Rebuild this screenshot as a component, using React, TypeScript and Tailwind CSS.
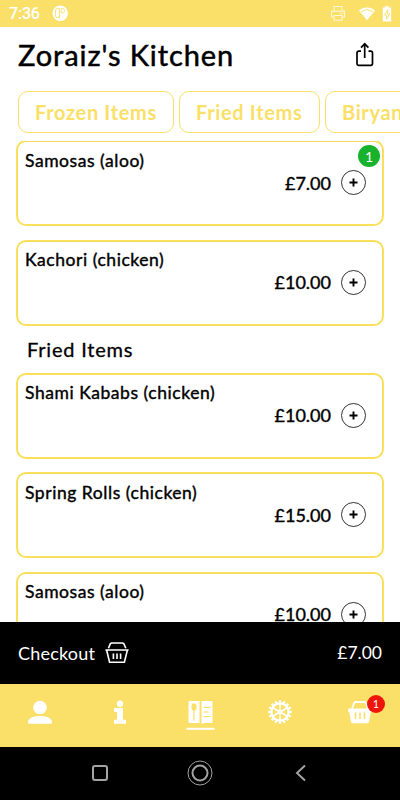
import type { ReactNode } from "react";

type Dish = { name: string; price: string; count?: number };

const frozen: Dish[] = [
  { name: "Samosas (aloo)", price: "£7.00", count: 1 },
  { name: "Kachori (chicken)", price: "£10.00" },
];

const fried: Dish[] = [
  { name: "Shami Kababs (chicken)", price: "£10.00" },
  { name: "Spring Rolls (chicken)", price: "£15.00" },
  { name: "Samosas (aloo)", price: "£10.00" },
];

function StatusBar() {
  return (
    <div className="flex h-[27px] shrink-0 items-center bg-[#fadf68] pr-[8px] pl-[9px] text-white">
      <span className="w-[42px] font-[Roboto] text-[16px] leading-[27px] font-medium tracking-[-0.2px]">7:36</span>
      <svg width="17" height="17" viewBox="0 0 17 17" className="ml-px">
        <circle cx="8.2" cy="8.2" r="7.8" fill="#fff" />
        <path d="M7.5 13V3.5M7.5 3.5H5.4A2 2 0 0 0 3.5 5.5v5.3a2 2 0 0 0 4 0M9.2 3.5h1.4a1.8 1.8 0 0 1 1.8 1.8v.9A1.8 1.8 0 0 1 10.6 8H9.2z" fill="none" stroke="#fadf68" strokeWidth=".9" />
      </svg>
      <div className="ml-auto flex items-center">
        <svg width="16" height="17" viewBox="0 0 16 17" fill="none" stroke="#fff" strokeOpacity=".75" strokeWidth="1.1">
          <path d="M4 6V1.5h8V6M4 12H1.5V6.3h13V12H12M4 10.5h8v4.8H4zM10 8.4h1M12.3 8.4h1" />
        </svg>
        <svg width="18" height="16" viewBox="0 0 18 16" className="ml-[12px]">
          <path d="M1 4.5C5.5.5 12.5.5 17 4.5L9 14.2z" fill="#fff" />
          <path d="M3 5.8Q9 1.8 15 5.8" fill="none" stroke="#fadf68" strokeWidth="1" />
        </svg>
        <svg width="10" height="16" viewBox="0 0 10 16" className="ml-[6px]">
          <path d="M3.2 0h3.6v1.6h2.4v14H.8v-14h2.4z" fill="#fff" />
          <path d="M5.7 3.6 2.4 9h2.1v4.4L7.8 8H5.7z" fill="#fff" stroke="#fadf68" strokeWidth=".9" />
        </svg>
      </div>
    </div>
  );
}

function Chip({ label, width }: { label: string; width: string }) {
  return (
    <div className={`flex h-[42px] shrink-0 items-center rounded-[10px] border border-[#fadf68] pl-4 text-[20px] font-bold tracking-[0.65px] whitespace-nowrap text-[#fadf68] ${width}`}>
      {label}
    </div>
  );
}

function DishCard({ dish }: { dish: Dish }) {
  return (
    <div className="relative h-[86px] shrink-0 rounded-[10px] border-2 border-[#fadf5c] bg-white">
      <div className="pt-[6.5px] pl-[7px] text-[17.5px] leading-[24px] tracking-[0.55px] [-webkit-text-stroke:0.4px_black]">{dish.name}</div>
      <div className="-mt-px flex h-[22px] items-center justify-end pr-[16px]">
        <span className="mr-[10px] text-[18px] leading-[22px] [-webkit-text-stroke:0.4px_black]">{dish.price}</span>
        <svg width="25" height="25" viewBox="0 0 25 25" fill="none" stroke="#000">
          <circle cx="12.5" cy="12.5" r="12" strokeWidth=".8" />
          <path d="M8.5 12.5h8M12.5 8.5v8" strokeWidth="1.9" />
        </svg>
      </div>
      {dish.count && (
        <div className="absolute top-[3px] right-[2px] flex size-[22px] items-center justify-center rounded-full bg-[#18b22c] text-[14px] text-white">{dish.count}</div>
      )}
    </div>
  );
}

function DishList({ dishes }: { dishes: Dish[] }) {
  return (
    <div className="flex flex-col gap-[13.5px]">
      {dishes.map((dish) => (
        <DishCard key={dish.name} dish={dish} />
      ))}
    </div>
  );
}

function NavItem({ children }: { children: ReactNode }) {
  return <div className="flex w-20 justify-center pt-[16px]">{children}</div>;
}

function GearIcon() {
  return (
    <svg width="24" height="24" viewBox="-12 -12 24 24" fill="none" stroke="#fff">
      {Array.from({ length: 16 }, (_, i) => (
        <path key={i} d="M0-9V-11.8" strokeWidth="2.2" transform={`rotate(${i * 22.5})`} />
      ))}
      <circle r="8.7" strokeWidth="2.4" />
      <circle r="2.4" fill="#fff" stroke="none" />
      {Array.from({ length: 6 }, (_, i) => (
        <path key={i} d="M0-1V-8" strokeWidth="1.5" transform={`rotate(${i * 60})`} />
      ))}
    </svg>
  );
}

export default function App() {
  return (
    <div className="flex h-[800px] w-[400px] flex-col overflow-hidden bg-white font-['Lato','Liberation_Sans',sans-serif] text-black">
      <StatusBar />
      <header className="flex h-[64px] shrink-0 items-start justify-between pr-[26px] pl-[18px]">
        <h1 className="pt-[10px] text-[29px] leading-[36px] tracking-[0.9px] whitespace-nowrap [-webkit-text-stroke:0.5px_black]">Zoraiz's Kitchen</h1>
        <svg width="20" height="26" viewBox="0 0 20 26" fill="none" stroke="#000" strokeWidth="1.7" className="mt-[15px] -mr-px">
          <path d="M6 9.2H3.7A1.7 1.7 0 0 0 2 10.9v10.7A1.7 1.7 0 0 0 3.7 23.3h12.1a1.7 1.7 0 0 0 1.7-1.7V10.9a1.7 1.7 0 0 0-1.7-1.7h-2.3M9.7 16V2M6 5.6l3.7-3.8 3.7 3.8" />
        </svg>
      </header>
      <div className="flex h-[50px] shrink-0 gap-[5px] overflow-hidden pl-[18px]">
        <Chip label="Frozen Items" width="w-[156px]" />
        <Chip label="Fried Items" width="w-[141px]" />
        <Chip label="Biryani" width="w-[120px]" />
      </div>
      <main className="h-[481px] shrink-0 overflow-hidden px-4">
        <div className="-mt-px flex flex-col">
          <DishList dishes={frozen} />
          <h2 className="h-[47px] shrink-0 pl-[11px] text-[20px] leading-[46px] tracking-[0.8px] [-webkit-text-stroke:0.3px_black]">Fried Items</h2>
          <DishList dishes={fried} />
        </div>
      </main>
      <div className="flex h-[62px] shrink-0 items-center bg-black px-[18px] text-[18px] text-white">
        <span className="w-[87px] tracking-[0.2px]">Checkout</span>
        <svg width="24" height="22" viewBox="0 0 24 22" fill="none" stroke="#fff" strokeWidth="1.6">
          <path d="M3.4 6.2 5.4 1.6 6.6 1h11l1.2.6 2 4.6M.4 8h23.2M1.6 8l3 12.2h14.8l3-12.2M8.4 11.5v5.5M12 11.5v5.5M15.6 11.5v5.5" />
        </svg>
        <span className="ml-auto text-[17.5px]">£7.00</span>
      </div>
      <nav className="flex h-[63px] shrink-0 bg-[#fadf68]">
        <NavItem>
          <svg width="24" height="24" viewBox="0 0 24 24" fill="#fff">
            <circle cx="12" cy="7.5" r="6.8" />
            <path d="M0 22c0-8 24-8 24 0 0 1-.4 1.8-1.3 1.8H1.3C.4 23.8 0 23 0 22z" />
          </svg>
        </NavItem>
        <NavItem>
          <svg width="12" height="24" viewBox="0 0 12 24" fill="#fff">
            <circle cx="6" cy="3.8" r="3.2" />
            <path d="M0 8h9v11.7h3v4H0v-4h3V12H0z" />
          </svg>
        </NavItem>
        <NavItem>
          <svg width="29" height="31" viewBox="0 0 29 31" fill="#fff">
            <path d="M3.5 1h10v22h-10a1 1 0 0 1-1-1V2a1 1 0 0 1 1-1zM15.5 1h10a1 1 0 0 1 1 1v20a1 1 0 0 1-1 1h-8l-2 1.2z" />
            <ellipse cx="8" cy="7" rx="2.6" ry="3.7" fill="#fadf68" />
            <path d="M8 10v10.5M17.5 7.3h7M17.5 12h5M17.5 16.5h7" stroke="#fadf68" strokeWidth="1.2" />
            <path d="M.5 27.8h28v2H.5z" />
          </svg>
        </NavItem>
        <NavItem><GearIcon /></NavItem>
        <NavItem>
          <div className="relative h-6 w-6">
            <svg width="24" height="24" viewBox="0 0 24 24">
              <path d="M4 9 6.2 2.8 7.4 2h9.2l1.2.8L20 9" fill="none" stroke="#fff" strokeWidth="1.8" />
              <path d="M0 8.6h24v3.2h-1.1l-2 10.3a1.5 1.5 0 0 1-1.5 1.2H4.6a1.5 1.5 0 0 1-1.5-1.2L1.1 11.8H0z" fill="#fff" />
              <path d="M7.5 12.5v6.6M12 12.5v6.6M16.5 12.5v6.6" stroke="#fadf68" strokeWidth="1.6" />
            </svg>
            <div className="absolute -top-[5px] left-[19px] flex size-[18px] items-center justify-center rounded-full bg-[#ee160b] text-[11px] text-white">1</div>
          </div>
        </NavItem>
      </nav>
      <div className="flex grow items-start justify-center bg-black pt-[13px]">
        <svg width="220" height="26" viewBox="0 0 220 26" fill="none" stroke="#a3a3a3">
          <rect x="3" y="6" width="14" height="14" rx="2" strokeWidth="2" />
          <circle cx="110" cy="13" r="12" strokeWidth="1" />
          <circle cx="110" cy="13" r="7.5" strokeWidth="2" />
          <path d="m215 5.5-8 7.5 8 7.5" strokeWidth="2" />
        </svg>
      </div>
    </div>
  );
}
